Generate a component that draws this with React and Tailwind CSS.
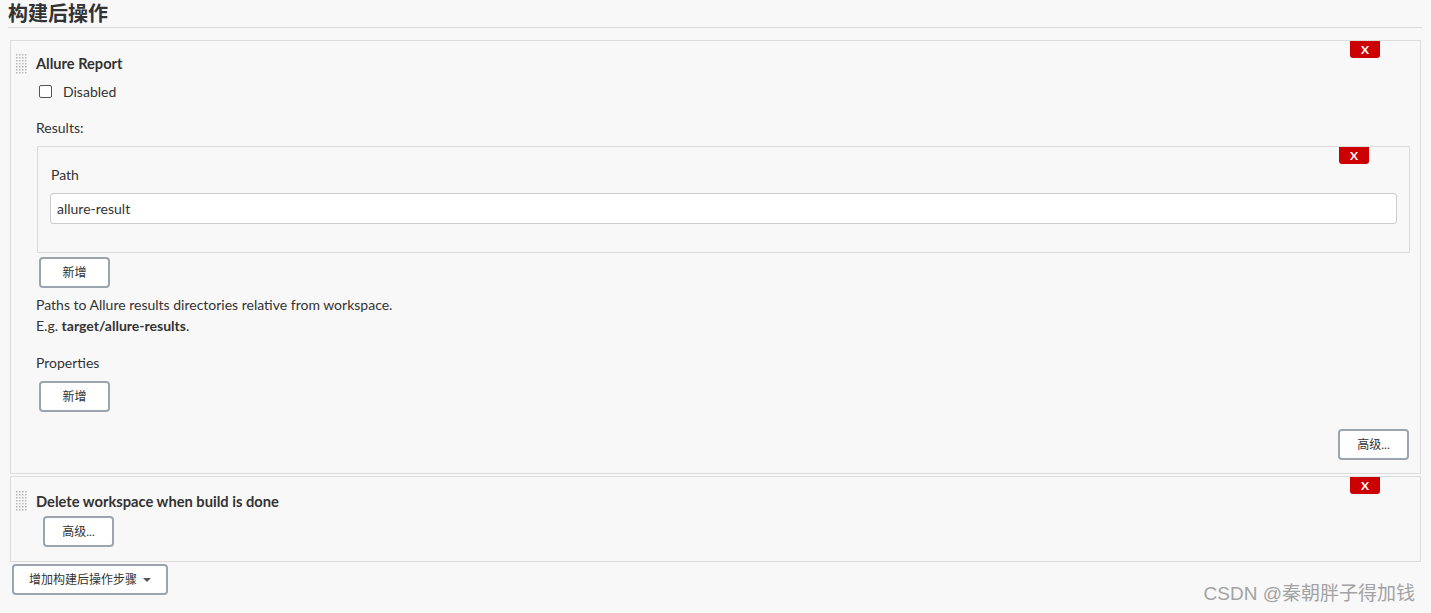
import React from "react";

const font = { fontFamily: 'Lato, "Noto Sans CJK SC", sans-serif' };

function Handle({ className }) {
  const dots = [];
  for (let r = 0; r < 7; r++)
    for (let c = 0; c < 4; c++)
      dots.push(<rect key={r + "-" + c} x={c * 3} y={r * 3} width="1.5" height="1.5" fill="#b8b8b8" />);
  return (
    <svg className={className} width="12" height="21" viewBox="0 0 12 21">
      {dots}
    </svg>
  );
}

function XBtn({ className }) {
  return (
    <div className={"absolute top-0 w-[30px] h-[17px] bg-[#cc0000] rounded-b-[3px] flex items-center justify-center text-white text-[12px] font-bold leading-none " + className}>
      X
    </div>
  );
}

function Btn({ children, className = "" }) {
  return (
    <button className={"h-[31px] border-2 border-[#9aa5b0] rounded-[4px] bg-white text-[12px] text-[#333] flex items-center justify-center " + className}>
      {children}
    </button>
  );
}

export default function App() {
  return (
    <div className="relative w-[1431px] h-[613px] bg-[#f8f8f8] text-[#333] overflow-hidden" style={font}>
      <div className="ml-[8px] mr-[9px] h-[28px] border-b border-[#dcdcdc] text-[20px] font-bold leading-[26px] text-[#333]">
        构建后操作
      </div>

      <div className="relative mx-[10px] mt-[12px] h-[434px] border border-[#dcdcdc] pl-[25px] pt-[13px] flex flex-col">
        <Handle className="absolute left-[5px] top-[13px]" />
        <XBtn className="right-[40px]" />
        <div className="text-[14.6px] font-bold leading-[20px]">Allure Report</div>
        <div className="flex items-center h-[20px] mt-[7px] ml-[3px]">
          <span className="w-[13px] h-[13px] border border-[#555] rounded-[2px] bg-white" />
          <span className="ml-[11px] text-[14px]">Disabled</span>
        </div>
        <div className="mt-[17px] text-[14px] leading-[20px]">Results:</div>
        <div className="relative mt-[8px] ml-[1px] mr-[10px] h-[107px] border border-[#dcdcdc] pl-[13px] pr-[12px] pt-[18px]">
          <XBtn className="right-[40px]" />
          <div className="text-[14px] leading-[20px]">Path</div>
          <div className="mt-[8px] h-[31px] border border-[#ccc] rounded-[3px] bg-white flex items-center pl-[6px] text-[14px] -ml-[1px]">
            allure-result
          </div>
        </div>
        <Btn className="mt-[4px] ml-[3px] w-[71px]">新增</Btn>
        <div className="mt-[6px] text-[14px] leading-[21px]">
          Paths to Allure results directories relative from workspace.
          <br />
          E.g. <b>target/allure-results</b>.
        </div>
        <div className="mt-[17px] text-[14px] leading-[20px]">Properties</div>
        <Btn className="mt-[8px] ml-[3px] w-[71px]">新增</Btn>
        <div className="flex justify-end mt-[17px] mr-[11px]">
          <Btn className="w-[71px]">高级...</Btn>
        </div>
      </div>

      <div className="relative mx-[10px] mt-[2px] h-[86px] border border-[#dcdcdc] pl-[25px] pt-[14px]">
        <Handle className="absolute left-[5px] top-[14px]" />
        <XBtn className="right-[40px]" />
        <div className="text-[14.7px] font-bold leading-[20px]">Delete workspace when build is done</div>
        <Btn className="mt-[5px] ml-[7px] w-[71px]">高级...</Btn>
      </div>

      <Btn className="mt-[2px] ml-[12px] w-[156px] gap-[6px]">
        <span>增加构建后操作步骤</span>
        <span className="w-0 h-0 border-l-[4px] border-r-[4px] border-t-[4px] border-l-transparent border-r-transparent border-t-[#555]" />
      </Btn>

      <div className="absolute right-[16px] top-[581px] text-[19px] leading-[26px] text-[#a3a3a3]" style={{ fontFamily: '"Liberation Sans", "Noto Sans CJK SC", sans-serif' }}>
        CSDN @秦朝胖子得加钱
      </div>
    </div>
  );
}
